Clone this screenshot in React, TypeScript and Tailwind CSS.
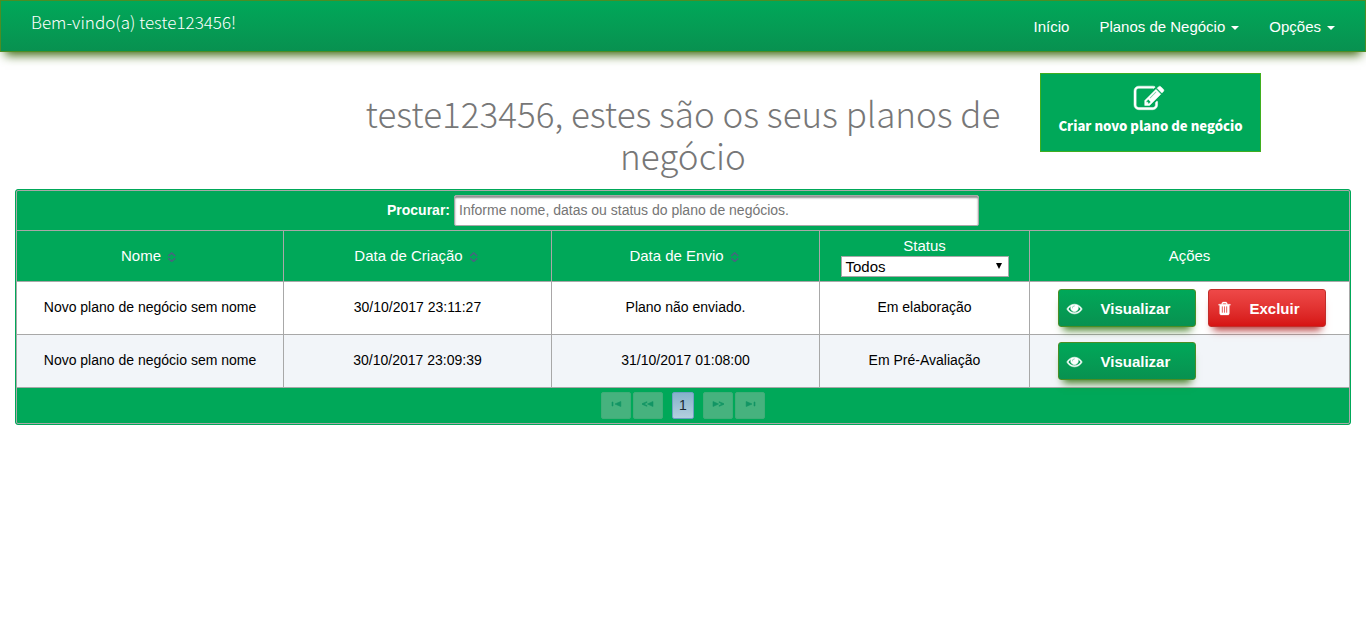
import type { ReactNode } from 'react';

const EYE =
  'M1664 960q-152-236-381-353 61 104 61 225 0 185-131.5 316.5t-316.5 131.5-316.5-131.5-131.5-316.5q0-121 61-225-229 117-381 353 133 205 333.5 326.5t434.5 121.5 434.5-121.5 333.5-326.5zm-720-384q0-20-14-34t-34-14q-125 0-214.5 89.5t-89.5 214.5q0 20 14 34t34 14 34-14 14-34q0-86 61-147t147-61q20 0 34-14t14-34zm848 384q0 34-20 69-140 230-376.5 368.5t-499.5 138.5-499.5-139-376.5-368q-20-35-20-69t20-69q140-229 376.5-368t499.5-139 499.5 139 376.5 368q20 35 20 69z';
const TRASH =
  'M704 1376v-704q0-14-9-23t-23-9h-64q-14 0-23 9t-9 23v704q0 14 9 23t23 9h64q14 0 23-9t9-23zm256 0v-704q0-14-9-23t-23-9h-64q-14 0-23 9t-9 23v704q0 14 9 23t23 9h64q14 0 23-9t9-23zm256 0v-704q0-14-9-23t-23-9h-64q-14 0-23 9t-9 23v704q0 14 9 23t23 9h64q14 0 23-9t9-23zm-544-992h448l-48-117q-7-9-17-11h-317q-10 2-17 11zm928 32v64q0 14-9 23t-23 9h-96v948q0 83-47 143.5t-113 60.5h-832q-66 0-113-58.5t-47-141.5v-952h-96q-14 0-23-9t-9-23v-64q0-14 9-23t23-9h309l70-167q15-37 54-63t79-26h320q40 0 79 26t54 63l70 167h309q14 0 23 9t9 23z';
const EDIT =
  'M888 1184l116-116-152-152-116 116v56h96v96h56zm440-720q-16-16-33 1l-350 350q-17 17-1 33t33-1l350-350q17-17 1-33zm80 594v190q0 119-84.5 203.5t-203.5 84.5h-832q-119 0-203.5-84.5t-84.5-203.5v-832q0-119 84.5-203.5t203.5-84.5h832q63 0 117 25 15 7 18 23 3 17-9 29l-49 49q-14 14-32 8-23-6-45-6h-832q-66 0-113 47t-47 113v832q0 66 47 113t113 47h832q66 0 113-47t47-113v-126q0-13 9-22l64-64q15-15 35-7t20 29zm-96-738l288 288-672 672h-288v-288zm444 132l-92 92-288-288 92-92q28-28 68-28t68 28l152 152q28 28 28 68t-28 68z';

function Glyph({ d, className }: { d: string; className: string }) {
  return (
    <svg viewBox="0 0 1792 1792" fill="currentColor" stroke="currentColor" className={`overflow-visible ${className}`} aria-hidden="true">
      <path d={d} />
    </svg>
  );
}

function Caret() {
  return <span className="mt-px ml-[6px] border-x-4 border-t-4 border-x-transparent border-t-white" />;
}

function SortIcon() {
  return (
    <svg width="10" height="10" viewBox="0 0 10 10" className="mr-[2px] ml-[6px] text-[#48647f]" fill="none" stroke="currentColor" strokeWidth="1.5" aria-hidden="true">
      <path d="M1.2 4 4.7 .9 8.2 4M1.2 6.3 4.7 9.4 8.2 6.3" />
    </svg>
  );
}

const COLS = 'grid grid-cols-[267px_268px_268px_210px_319px] border-b border-[#a8a8a8]';
const CELL = 'flex items-center justify-center border-r border-[#a8a8a8] pb-px';

function HeadCell({ children }: { children: ReactNode }) {
  return <div className="flex items-center justify-center border-r border-[#a8a8a8] pt-px">{children}</div>;
}

function ViewButton() {
  return (
    <button className="flex h-[38px] w-[138px] items-center rounded-[3px] border border-[#4c8d24] bg-linear-to-b from-[#00a859] to-[#089150] pt-px pl-2 text-[15px] font-bold text-white shadow-[0_8px_8px_-5px_#3c7a1c]">
      <Glyph d={EYE} className="size-[15px] [stroke-width:70]" />
      <span className="ml-[18.5px] pt-[2px]">Visualizar</span>
    </button>
  );
}

function DeleteButton() {
  return (
    <button className="ml-3 flex h-[38px] w-[118px] items-center rounded-[3px] border border-[#c12e2a] bg-linear-to-b from-[#ee4848] to-[#d61212] pt-px pl-2 text-[15px] font-bold text-white shadow-[0_8px_8px_-5px_#b03030]">
      <Glyph d={TRASH} className="mb-px size-[15px] [stroke-width:40]" />
      <span className="ml-[17.5px] pt-[2px]">Excluir</span>
    </button>
  );
}

interface Plan {
  name: string;
  created: string;
  sent: string;
  status: string;
  removable: boolean;
}

const PLANS: Plan[] = [
  { name: 'Novo plano de negócio sem nome', created: '30/10/2017 23:11:27', sent: 'Plano não enviado.', status: 'Em elaboração', removable: true },
  { name: 'Novo plano de negócio sem nome', created: '30/10/2017 23:09:39', sent: '31/10/2017 01:08:00', status: 'Em Pré-Avaliação', removable: false },
];

const PAGE = 'flex h-[27px] w-[30px] items-center justify-center rounded-[2px] border border-[#3fae78] bg-[#46b27e] pb-1 text-[#129564]';

function PageArrow({ d }: { d: string }) {
  return (
    <button className={PAGE}>
      <svg width="12" height="6" viewBox="0 0 12 6" fill="currentColor" stroke="currentColor" strokeWidth="0.6" aria-hidden="true">
        <path d={d} />
      </svg>
    </button>
  );
}

export default function App() {
  return (
    <div className="min-h-[623px] bg-white font-['Liberation_Sans',Arial,sans-serif] text-black">
      <nav className="flex h-[52px] justify-between border border-[#4c8d24] bg-linear-to-b from-[#00a859] to-[#089150] pr-[30px] pl-[30px] text-white shadow-[0_8px_10px_-5px_#386309]">
        <div className="pt-2 font-['Noto_Sans_CJK_SC',sans-serif] text-[17px] leading-[26px] font-light tracking-[0.02px]">Bem-vindo(a) teste123456!</div>
        <div className="flex h-[50px] items-center gap-[30px] pt-[3px] text-[15px]">
          <a>Início</a>
          <a className="flex items-center">Planos de Negócio<Caret /></a>
          <a className="flex items-center">Opções<Caret /></a>
        </div>
      </nav>

      <header className="grid h-[137px] grid-cols-[357px_652px_auto] pt-[21px]">
        <h1 className="col-start-2 pt-[19px] text-center font-['Noto_Sans_CJK_SC',sans-serif] text-[35px] leading-[42px] font-extralight text-[#777]">
          teste123456, estes são os seus planos de negócio
        </h1>
        <button className="ml-[31px] flex h-[79px] w-[221px] flex-col items-center border border-[#3fae1f] bg-[#00a859] pt-[10px] text-white">
          <Glyph d={EDIT} className="mr-1 size-[30px] [stroke-width:30]" />
          <span className="mt-[2px] font-['Noto_Sans_CJK_SC',sans-serif] text-[13.1px] leading-5 font-black whitespace-nowrap">Criar novo plano de negócio</span>
        </button>
      </header>

      <main className="mx-[15px] rounded-[3px] border border-[#00a859] bg-[#00a859]">
        <div className="rounded-[2px] border border-[#a8a8a8]">
          <div className="flex h-10 items-start justify-center border-b border-[#a8a8a8] pt-1 text-[14px]">
            <label className="mr-1 pt-[7px] leading-4 font-bold text-white">Procurar:</label>
            <input
              className="h-[31px] w-[525px] rounded-[2px] border border-[#a8a8a8] bg-white px-1 pb-px text-[14px] shadow-[inset_0_2px_2px_#8f8f8f] placeholder:text-[#757575]"
              placeholder="Informe nome, datas ou status do plano de negócios."
            />
          </div>
          <div className={`${COLS} h-[51px] text-[15px] text-white`}>
            <HeadCell>Nome<SortIcon /></HeadCell>
            <HeadCell>Data de Criação<SortIcon /></HeadCell>
            <HeadCell>Data de Envio<SortIcon /></HeadCell>
            <div className="flex flex-col items-center border-r border-[#a8a8a8] pt-[6px]">
              <span className="leading-[18px]">Status</span>
              <div className="mt-px flex h-[21px] w-[168px] items-center justify-between border border-[#a8a8a8] bg-white pr-[6px] pl-1 text-black">
                <span className="pt-[2px]">Todos</span>
                <svg width="6" height="6" viewBox="0 0 6 6" className="mb-[2px]" aria-hidden="true"><path d="M0 0h6L3 6z" /></svg>
              </div>
            </div>
            <div className="flex items-center justify-center pt-px">Ações</div>
          </div>
          {PLANS.map((p, i) => (
            <div key={i} className={`${COLS} h-[53px] text-[14px] ${i % 2 ? 'bg-[#f2f5f9]' : 'bg-white'}`}>
              <div className={CELL}>{p.name}</div>
              <div className={CELL}>{p.created}</div>
              <div className={CELL}>{p.sent}</div>
              <div className={CELL}>{p.status}</div>
              <div className="flex items-start pt-[7px] pl-7">
                <ViewButton />
                {p.removable && <DeleteButton />}
              </div>
            </div>
          ))}
          <div className="flex h-[35px] items-start justify-center pt-1">
            <PageArrow d="M2 1h1v4H2zM10.8 .5v5L5 3z" />
            <div className="ml-[2px]"><PageArrow d="M5 .7v.7L2 3 5 4.6v.7L0 3.3v-.6zM11 .5v5L5.5 3z" /></div>
            <button className="mx-[9px] flex h-[27px] w-[22px] items-center justify-center rounded-[2px] border border-[#6f9fc4] bg-linear-to-b from-[#85b2cb] to-[#b4cfdf] text-[14px] text-[#1c2a33]">1</button>
            <PageArrow d="M1 .5v5L6.5 3zM7 .7v.7L10 3 7 4.6v.7l5-2v-.6z" />
            <div className="ml-[2px]"><PageArrow d="M2.2 .5v5L8 3zM10 1h1v4h-1z" /></div>
          </div>
        </div>
      </main>
    </div>
  );
}
